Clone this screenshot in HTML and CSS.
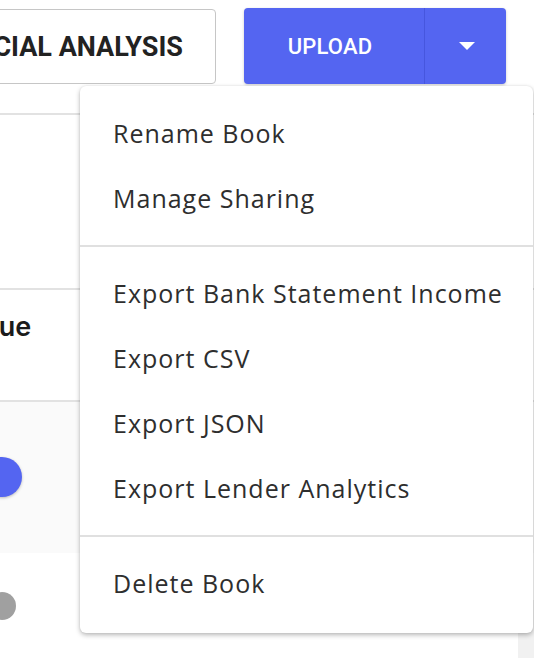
FILE: index.html
```html
<!DOCTYPE html>
<html>
<head>
<meta charset="utf-8">
<link rel="stylesheet" href="styles.css">
</head>
<body>
<div class="page">
  <div class="toolbar">
    <button class="btn-outline">FINANCIAL ANALYSIS</button>
    <div class="split">
      <button class="split-main">UPLOAD</button>
      <button class="split-caret" aria-label="more">
        <svg width="16" height="8" viewBox="0 0 16 8"><path d="M0 0 H16 L8 8 Z" fill="#fff"/></svg>
      </button>
    </div>
  </div>

  <div class="table">
    <div class="row row-top"></div>
    <div class="row row-head"><span class="head-text">Value</span></div>
    <div class="row row-shade"><span class="knob knob-on"></span></div>
    <div class="row row-plain"><span class="knob knob-off"></span></div>
  </div>
  <div class="side-strip"></div>

  <div class="menu">
    <div class="group g1">
      <div class="item">Rename Book</div>
      <div class="item">Manage Sharing</div>
    </div>
    <div class="group g2">
      <div class="item">Export Bank Statement Income</div>
      <div class="item">Export CSV</div>
      <div class="item">Export JSON</div>
      <div class="item">Export Lender Analytics</div>
    </div>
    <div class="group g3">
      <div class="item">Delete Book</div>
    </div>
  </div>
</div>
</body>
</html>
```

FILE: styles.css
```css
html, body {
  margin: 0;
  padding: 0;
  background: #ffffff;
  overflow: hidden;
}
.page {
  position: relative;
  width: 534px;
  height: 658px;
  overflow: hidden;
}
.toolbar {
  display: flex;
  justify-content: flex-end;
  align-items: flex-start;
  gap: 28px;
  padding: 8px 28px 0 0;
  height: 76px;
}
.btn-outline {
  flex: none;
  height: 75px;
  margin-top: 1px;
  box-sizing: border-box;
  border: 1.5px solid #c6c6c6;
  border-radius: 4px;
  background: #fff;
  padding: 0 32px 0 32px;
  font-family: Roboto, "Liberation Sans", sans-serif;
  font-weight: 700;
  font-size: 27px;
  color: #222222;
  white-space: nowrap;
}
.split {
  flex: none;
  display: flex;
  height: 76px;
  border-radius: 4px;
  background: #5465f1;
  box-shadow: 0 1px 3px rgba(0,0,0,0.2);
  overflow: hidden;
}
.split button {
  border: none;
  background: transparent;
  color: #fff;
  padding: 0;
  margin: 0;
}
.split-main {
  width: 181px;
  border-right: 1px solid #4656de !important;
  font-family: Roboto, "Liberation Sans", sans-serif;
  font-weight: 500;
  font-size: 22px;
  letter-spacing: 0.2px;
  padding-right: 8px !important;
}
.split-caret {
  width: 81px;
  display: flex;
  align-items: center;
  justify-content: center;
}
.split-caret svg { display: block; margin-left: 2px; }

.table {
  margin-top: 29px;
}
.row {
  border-top: 2px solid #e2e2e2;
  box-sizing: border-box;
}
.row-top { height: 175px; }
.row-head {
  height: 112px;
  padding-top: 19px;
}
.head-text {
  display: block;
  margin-left: -42px;
  font-family: Inter, "Liberation Sans", sans-serif;
  font-weight: 600;
  font-size: 27px;
  line-height: 36px;
  color: #1b1b1b;
}
.row-shade {
  height: 153px;
  background: #fafafa;
  display: flex;
  align-items: center;
}
.row-plain {
  border-top: none;
  height: 110px;
  display: flex;
  align-items: flex-start;
  padding-top: 39px;
}
.knob {
  display: block;
  border-radius: 50%;
}
.knob-on {
  width: 40px;
  height: 40px;
  margin-left: -18px;
  background: #5465f1;
  box-shadow: 0 1px 3px rgba(0,0,0,0.25);
  margin-top: -2px;
}
.knob-off {
  width: 28px;
  height: 28px;
  margin-left: -12px;
  background: #a0a0a0;
}
.side-strip {
  position: absolute;
  right: 0;
  top: 600px;
  width: 16px;
  height: 58px;
  background: #f1f1f1;
}

.menu {
  position: absolute;
  left: 80px;
  top: 86px;
  width: 453px;
  background: #fff;
  border-radius: 6px;
  box-shadow: 0 2px 5px rgba(0,0,0,0.28), 0 0 2px rgba(0,0,0,0.08);
  z-index: 2;
}
.group + .group {
  border-top: 2px solid #e0e0e0;
}
.g1 { padding: 14px 0 15px; }
.g2 { padding: 13px 0 15px; }
.g3 { padding: 13px 0 18px; }
.item {
  height: 65px;
  display: flex;
  align-items: center;
  padding-left: 33px;
  font-family: "Open Sans", "Noto Sans", sans-serif;
  font-size: 25px;
  letter-spacing: 1px;
  color: #2e2e2e;
  white-space: nowrap;
}
```
